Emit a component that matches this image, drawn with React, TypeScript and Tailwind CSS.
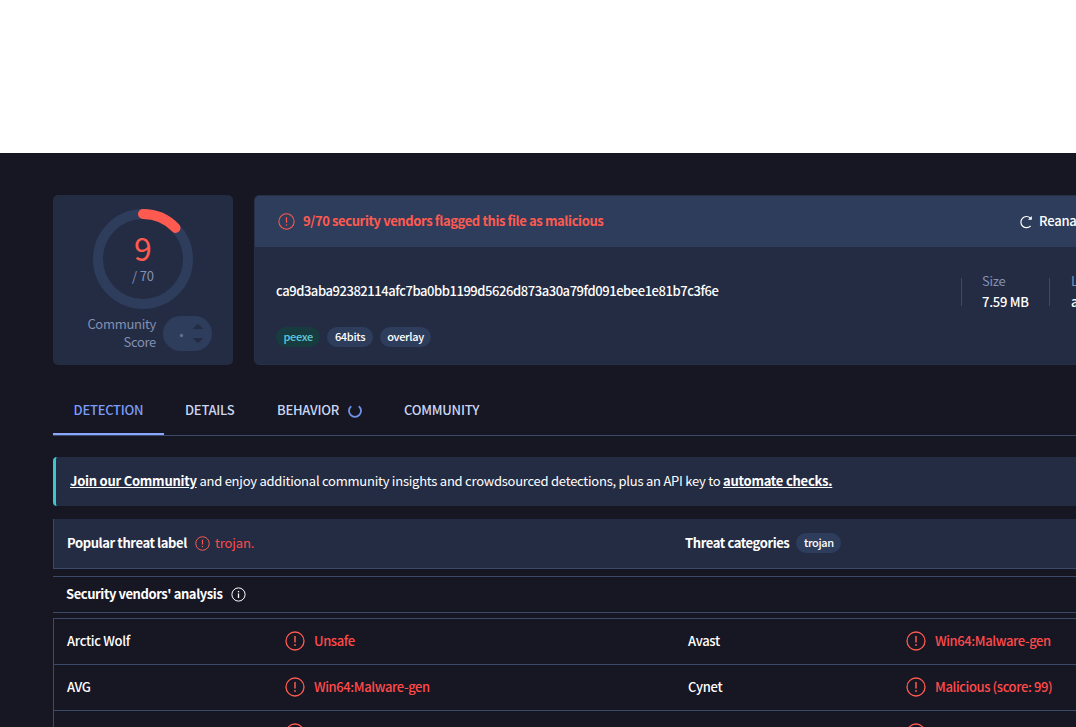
import type { ReactNode } from "react";

type Verdict = { engine: string; result: string };

const rows: [Verdict, Verdict][] = [
  [
    { engine: "Arctic Wolf", result: "Unsafe" },
    { engine: "Avast", result: "Win64:Malware-gen" },
  ],
  [
    { engine: "AVG", result: "Win64:Malware-gen" },
    { engine: "Cynet", result: "Malicious (score: 99)" },
  ],
  [
    { engine: "", result: "" },
    { engine: "", result: "" },
  ],
];

function AlertIcon({ size, stroke = 1 }: { size: number; stroke?: number }) {
  return (
    <svg width={size} height={size} viewBox="0 0 20 20" fill="none" className="shrink-0 text-[#ff5a50]">
      <circle cx="10" cy="10" r="9" stroke="currentColor" strokeWidth={stroke} />
      <path d="M10 5v6.4" stroke="currentColor" strokeWidth={stroke + 0.2} />
      <circle cx="10" cy="14" r="0.9" fill="currentColor" />
    </svg>
  );
}

function Tag({ children, green = false }: { children: ReactNode; green?: boolean }) {
  return (
    <span
      className={`flex h-5 items-center rounded-full px-[7.5px] pb-px text-[11px] font-medium tracking-[-0.32px] ${
        green ? "bg-[#173b3f] text-[#5fc9dc]" : "bg-[#2e3d5c] text-white"
      }`}
    >
      {children}
    </span>
  );
}

function ScoreCard() {
  return (
    <div className="flex h-[170px] w-[180px] shrink-0 flex-col items-center rounded-[5px] bg-[#242c43] pt-[14px]">
      <div className="grid h-[100px] w-[100px] place-items-center">
        <svg width="100" height="100" viewBox="0 0 100 100" fill="none" className="col-start-1 row-start-1">
          <circle cx="50" cy="50" r="45" stroke="#2e3d5c" strokeWidth="10" />
          <path d="M50 5A45 45 0 0 1 82.5 18.9" stroke="#ff5a50" strokeWidth="10" strokeLinecap="round" />
        </svg>
        <div className="col-start-1 row-start-1 flex flex-col items-center">
          <span className="text-[32px] leading-[34px] text-[#ff5a50]">9</span>
          <span className="mt-0.5 mb-[3px] text-[13px] leading-5 tracking-[-0.15px] text-[#8290b4]">/ 70</span>
        </div>
      </div>
      <div className="mt-[6px] flex w-full items-center pl-[34px]">
        <p className="w-[69px] text-right text-[13px] leading-[18px] tracking-[-0.3px] text-[#8290b4]">
          Community Score
        </p>
        <svg width="49" height="35" viewBox="0 0 49 35" className="ml-[7px] shrink-0">
          <rect width="49" height="35" rx="17.5" fill="#2e3d5c" />
          <circle cx="18.5" cy="19.5" r="1.7" fill="#5f6f90" />
          <path d="M29.5 13L35 7.8L40.5 13z" fill="#242c43" />
          <path d="M29.5 22L35 27.2L40.5 22z" fill="#242c43" />
        </svg>
      </div>
    </div>
  );
}

function FileCard() {
  return (
    <div className="flex h-[170px] grow flex-col overflow-hidden rounded-[5px] border border-[#263049] bg-[#242c43]">
      <div className="flex h-[51px] shrink-0 items-center bg-[#2e3d5c] pl-[23px]">
        <AlertIcon size={17} stroke={1.2} />
        <span className="mb-px ml-[8px] text-[13px] font-bold tracking-[-0.39px] text-[#ff5a50]">
          9/70 security vendors flagged this file as malicious
        </span>
        <div className="ml-auto flex w-[276px] items-center text-white">
          <svg width="14" height="14" viewBox="0 0 14 14" fill="none" stroke="currentColor">
            <path d="M11.3 3A5.6 5.6 0 1 0 11.6 10.9" strokeWidth="1.2" />
            <path d="M12.8 1V4.8H9z" fill="currentColor" stroke="none" />
          </svg>
          <span className="mb-px ml-[6px] text-[13px] font-medium tracking-[-0.2px]">Reanalyze</span>
        </div>
      </div>
      <div className="flex pt-[26px] pl-[21px]">
        <div className="w-[685px]">
          <p className="mt-2 text-[13px] leading-5 font-medium tracking-[-0.44px] text-white">
            ca9d3aba92382114afc7ba0bb1199d5626d873a30a79fd091ebee1e81b7c3f6e
          </p>
          <div className="mt-[26px] flex gap-[7px]">
            <Tag green>peexe</Tag>
            <Tag>64bits</Tag>
            <Tag>overlay</Tag>
          </div>
        </div>
        <div className="mt-[5px] flex h-7 w-[88px] items-center border-l border-[#3c4a69] pb-0.5 pl-5">
          <div className="text-[13px] leading-[21px] tracking-[-0.25px] whitespace-nowrap">
            <p className="text-[#8290b4]">Size</p>
            <p className="font-medium text-white">7.59 MB</p>
          </div>
        </div>
        <div className="mt-[5px] flex h-7 grow items-center border-l border-[#3c4a69] pb-0.5 pl-[21px]">
          <div className="text-[13px] leading-[21px] tracking-[-0.25px] whitespace-nowrap">
            <p className="text-[#8290b4]">Last Analysis Date</p>
            <p className="font-medium text-white">a moment ago</p>
          </div>
        </div>
      </div>
    </div>
  );
}

function Tabs() {
  return (
    <nav className="mt-[21px] flex h-[50px] border-b border-[#3c4a69] text-[13px] font-medium tracking-[-0.25px] text-[#c9d6f2]">
      <span className="flex w-[111px] items-center justify-center border-b-2 border-[#8ba6ff] text-[#7b9cf8]">DETECTION</span>
      <span className="flex w-[92px] items-center pb-0.5 pl-[21px]">DETAILS</span>
      <span className="flex w-[128px] items-center pb-0.5 pl-[21px]">
        BEHAVIOR
        <svg width="14" height="14" viewBox="0 0 14 14" fill="none" className="mt-0.5 ml-[9px]">
          <path d="M3.2 2.2A6 6 0 1 0 10.8 2.2" stroke="#6f93e8" strokeWidth="1.8" />
        </svg>
      </span>
      <span className="flex items-center pb-0.5 pl-5">COMMUNITY</span>
    </nav>
  );
}

function VerdictCell({ engine, result }: Verdict) {
  return (
    <div className="flex w-[621px] items-center pb-0.5 pl-[13px]">
      <span className="w-[218px] tracking-[-0.3px] text-white">{engine}</span>
      <AlertIcon size={20} stroke={1.3} />
      <span className="ml-[9px] tracking-[-0.4px] text-[#ff4a4a]">{result}</span>
    </div>
  );
}

export default function App() {
  return (
    <div className="h-[727px] w-full overflow-hidden bg-white font-['Noto_Sans_CJK_JP',sans-serif]">
      <div className="mt-[153px] h-[574px] overflow-hidden bg-[#171623] pt-[42px] pl-[53px]">
        <div className="w-[1243px]">
          <div className="flex gap-[21px]">
            <ScoreCard />
            <FileCard />
          </div>
          <Tabs />

          <div className="mt-[21px] flex h-[49px] items-center rounded-[4px] border-l-[3px] border-[#3fc6c9] bg-[#242c43] pb-0.5 pl-[14px] text-[13px] tracking-[-0.24px] text-white">
            <p>
              <a className="font-bold underline">Join our Community</a> and enjoy additional community insights and
              crowdsourced detections, plus an API key to <a className="font-bold underline">automate checks.</a>
            </p>
          </div>

          <div className="mt-[13px] flex h-[50px] items-center border-b border-l border-[#3c4a69] bg-[#242c43] pb-px text-[13px] text-white">
            <div className="flex w-[631px] items-center pl-[13px]">
              <span className="mr-2 font-bold tracking-[-0.4px]">Popular threat label</span>
              <AlertIcon size={15} stroke={1.3} />
              <span className="ml-[5px] tracking-[-0.1px] text-[#ff4a4a]">trojan.</span>
            </div>
            <span className="mr-[7px] font-bold tracking-[-0.4px]">Threat categories</span>
            <Tag>trojan</Tag>
          </div>

          <div className="mt-[7px] flex h-[37px] items-center border-y border-[#3c4a69] pb-px pl-[13px] text-[13px] font-bold tracking-[-0.42px] text-white">
            Security vendors' analysis
            <svg width="15" height="15" viewBox="0 0 15 15" fill="none" stroke="currentColor" className="ml-[9px]">
              <circle cx="7.5" cy="7.5" r="6.6" />
              <path d="M7.5 6.5V11" strokeWidth="1.3" />
              <path d="M7.5 4V5.3" strokeWidth="1.3" />
            </svg>
          </div>

          <div className="mt-[5px] border-t border-l border-[#3c4a69] text-[13px] font-medium">
            {rows.map(([left, right], i) => (
              <div key={i} className="flex h-[46px] border-b border-[#3c4a69]">
                <VerdictCell {...left} />
                <VerdictCell {...right} />
              </div>
            ))}
          </div>
        </div>
      </div>
    </div>
  );
}
